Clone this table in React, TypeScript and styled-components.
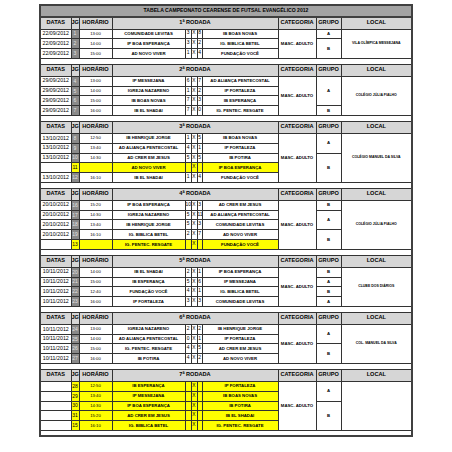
import React from "react";
import styled, { createGlobalStyle, css } from "styled-components";

const Global = createGlobalStyle`
  html, body { margin: 0; padding: 0; background: #ffffff; }
  body { font-family: "Liberation Sans", Arial, sans-serif; color: #000; }
`;

const Page = styled.div`
  padding: 4px 0 0 39px;
`;

const Table = styled.table`
  width: 372px;
  table-layout: fixed;
  border-collapse: collapse;
  border: 2px solid #404040;
`;

const cellBase = css`
  border: 1px solid #333333;
  padding: 0;
  text-align: center;
  vertical-align: middle;
  line-height: 1;
  white-space: nowrap;
  overflow: hidden;
`;

const TitleRow = styled.tr`
  height: 12px;
`;

const TitleCell = styled.td`
  ${cellBase};
  background: #a3a3a3;
  font-weight: 700;
  font-size: 5.1px;
  border-bottom: 2px solid #404040;
`;

const HeadRow = styled.tr`
  height: 12px;
`;

const HeadCell = styled.td`
  ${cellBase};
  background: #d6d6d6;
  font-weight: 700;
  font-size: 5.6px;
`;

const Row = styled.tr`
  height: 9.9px;
`;

const hl = css<{ $hl?: boolean }>`
  background: ${(p) => (p.$hl ? "#ffff00" : "#ffffff")};
`;

const DateCell = styled.td`
  ${cellBase};
  font-size: 5.3px;
  background: #ffffff;
`;

const JgCell = styled.td<{ $hl?: boolean }>`
  ${cellBase};
  font-size: 5px;
  background: ${(p) => (p.$hl ? "#ffff00" : "#8a8a8a")};
  color: ${(p) => (p.$hl ? "#000" : "#e4e4e4")};
`;

const TimeCell = styled.td<{ $hl?: boolean }>`
  ${cellBase};
  ${hl};
  font-size: 4.2px;
`;

const TeamCell = styled.td<{ $hl?: boolean }>`
  ${cellBase};
  ${hl};
  font-weight: 700;
  font-size: 4.3px;
`;

const ScoreCell = styled.td<{ $hl?: boolean }>`
  ${cellBase};
  ${hl};
  font-size: 4.9px;
`;

const CatCell = styled.td`
  ${cellBase};
  font-weight: 700;
  font-size: 4.3px;
  background: #ffffff;
`;

const GroupCell = styled.td`
  ${cellBase};
  font-weight: 700;
  font-size: 4.3px;
  background: #ffffff;
`;

const LocalCell = styled.td`
  ${cellBase};
  font-weight: 700;
  font-size: 3.5px;
  background: #ffffff;
`;

const GapRow = styled.tr`
  height: 5.5px;
`;

const GapCell = styled.td`
  border: 1px solid #333333;
  border-left: none;
  border-right: none;
  padding: 0;
  background: #ffffff;
`;

type Match = {
  date: string;
  jg: string;
  time: string;
  home: string;
  s1: string;
  s2: string;
  away: string;
  hl?: boolean;
};

type Round = {
  name: string;
  matches: Match[];
  groups: { label: string; span: number }[];
  local: string;
};

const m = (
  date: string,
  jg: string,
  time: string,
  home: string,
  s1: string,
  s2: string,
  away: string,
  hl?: boolean
): Match => ({ date, jg, time, home, s1, s2, away, hl });

const rounds: Round[] = [
  {
    name: "1ª RODADA",
    local: "VILA OLÍMPICA MESSEJANA",
    groups: [
      { label: "A", span: 1 },
      { label: "B", span: 2 },
    ],
    matches: [
      m("22/09/2012", "1", "13:00", "COMUNIDADE LEVITAS", "3", "8", "IB BOAS NOVAS"),
      m("22/09/2012", "2", "14:00", "IP BOA ESPERANÇA", "3", "2", "IG. BIBLICA BETEL"),
      m("22/09/2012", "3", "15:00", "AD NOVO VIVER", "1", "4", "FUNDAÇÃO VOCÊ"),
    ],
  },
  {
    name: "2ª RODADA",
    local: "COLÉGIO JÚLIA FIALHO",
    groups: [
      { label: "A", span: 3 },
      { label: "B", span: 1 },
    ],
    matches: [
      m("29/09/2012", "4", "13:00", "IP MESSEJANA", "6", "7", "AD ALIANÇA PENTECOSTAL"),
      m("29/09/2012", "5", "14:00", "IGREJA NAZARENO", "1", "2", "IP FORTALEZA"),
      m("29/09/2012", "6", "15:00", "IB BOAS NOVAS", "7", "3", "IB ESPERANÇA"),
      m("29/09/2012", "7", "16:00", "IB EL SHADAI", "7", "0", "IG. PENTEC. RESGATE"),
    ],
  },
  {
    name: "3ª RODADA",
    local: "COLÉGIO MANUEL DA SILVA",
    groups: [
      { label: "A", span: 2 },
      { label: "B", span: 3 },
    ],
    matches: [
      m("13/10/2012", "8", "12:50", "IB HENRIQUE JORGE", "1", "5", "IB BOAS NOVAS"),
      m("13/10/2012", "9", "13:40", "AD ALIANÇA PENTECOSTAL", "4", "1", "IP FORTALEZA"),
      m("13/10/2012", "10", "14:30", "AD CRER EM JESUS", "5", "5", "IB POTIRA"),
      m("", "11", "", "AD NOVO VIVER", "", "", "IP BOA ESPERANÇA", true),
      m("13/10/2012", "12", "16:10", "IB EL SHADAI", "1", "4", "FUNDAÇÃO VOCÊ"),
    ],
  },
  {
    name: "4ª RODADA",
    local: "COLÉGIO JÚLIA FIALHO",
    groups: [
      { label: "B", span: 1 },
      { label: "A", span: 2 },
      { label: "B", span: 2 },
    ],
    matches: [
      m("20/10/2012", "16", "15:20", "IP BOA ESPERANÇA", "10", "3", "AD CRER EM JESUS"),
      m("20/10/2012", "17", "14:30", "IGREJA NAZARENO", "5", "11", "AD ALIANÇA PENTECOSTAL"),
      m("20/10/2012", "18", "13:40", "IB HENRIQUE JORGE", "5", "3", "COMUNIDADE LEVITAS"),
      m("20/10/2012", "19", "16:10", "IG. BIBLICA BETEL", "2", "7", "AD NOVO VIVER"),
      m("", "13", "", "IG. PENTEC. RESGATE", "", "", "FUNDAÇÃO VOCÊ", true),
    ],
  },
  {
    name: "5ª RODADA",
    local: "CLUBE DOS DIÁRIOS",
    groups: [
      { label: "B", span: 1 },
      { label: "A", span: 1 },
      { label: "B", span: 1 },
      { label: "A", span: 1 },
    ],
    matches: [
      m("10/11/2012", "20", "14:00", "IB EL SHADAI", "2", "1", "IP BOA ESPERANÇA"),
      m("10/11/2012", "21", "15:00", "IB ESPERANÇA", "5", "6", "IP MESSEJANA"),
      m("10/11/2012", "22", "12:40", "FUNDAÇÃO VOCÊ", "4", "1", "IG. BIBLICA BETEL"),
      m("10/11/2012", "23", "16:00", "IP FORTALEZA", "3", "3", "COMUNIDADE LEVITAS"),
    ],
  },
  {
    name: "6ª RODADA",
    local: "COL. MANUEL DA SILVA",
    groups: [
      { label: "A", span: 2 },
      { label: "B", span: 2 },
    ],
    matches: [
      m("10/11/2012", "24", "13:00", "IGREJA NAZARENO", "2", "2", "IB HENRIQUE JORGE"),
      m("10/11/2012", "25", "14:00", "AD ALIANÇA PENTECOSTAL", "0", "1", "IP FORTALEZA"),
      m("10/11/2012", "26", "15:00", "IG. PENTEC. RESGATE", "4", "5", "AD CRER EM JESUS"),
      m("10/11/2012", "27", "16:00", "IB POTIRA", "4", "2", "AD NOVO VIVER"),
    ],
  },
  {
    name: "7ª RODADA",
    local: "",
    groups: [
      { label: "A", span: 2 },
      { label: "B", span: 3 },
    ],
    matches: [
      m("", "28", "12:50", "IB ESPERANÇA", "", "", "IP FORTALEZA", true),
      m("", "29", "13:40", "IP MESSEJANA", "", "", "IB BOAS NOVAS", true),
      m("", "30", "14:30", "IP BOA ESPERANÇA", "", "", "IB POTIRA", true),
      m("", "31", "15:20", "AD CRER EM JESUS", "", "", "IB EL SHADAI", true),
      m("", "15", "16:10", "IG. BIBLICA BETEL", "", "", "IG. PENTEC. RESGATE", true),
    ],
  },
];

const colWidths = [31, 8, 33, 73, 6, 6, 5, 76, 38, 25, 71];

function groupStarts(groups: Round["groups"]) {
  const map = new Map<number, { label: string; span: number }>();
  let idx = 0;
  groups.forEach((g) => {
    map.set(idx, g);
    idx += g.span;
  });
  return map;
}

function RoundBlock({ round }: { round: Round }) {
  const starts = groupStarts(round.groups);
  const n = round.matches.length;
  return (
    <>
      <HeadRow>
        <HeadCell>DATAS</HeadCell>
        <HeadCell>JG</HeadCell>
        <HeadCell>HORÁRIO</HeadCell>
        <HeadCell colSpan={5}>{round.name}</HeadCell>
        <HeadCell>CATEGORIA</HeadCell>
        <HeadCell>GRUPO</HeadCell>
        <HeadCell>LOCAL</HeadCell>
      </HeadRow>
      {round.matches.map((mt, i) => {
        const g = starts.get(i);
        return (
          <Row key={i}>
            <DateCell>{mt.date}</DateCell>
            <JgCell $hl={mt.hl}>{mt.jg}</JgCell>
            <TimeCell $hl={mt.hl}>{mt.time}</TimeCell>
            <TeamCell $hl={mt.hl}>{mt.home}</TeamCell>
            <ScoreCell $hl={mt.hl}>{mt.s1}</ScoreCell>
            <ScoreCell $hl={mt.hl}>X</ScoreCell>
            <ScoreCell $hl={mt.hl}>{mt.s2}</ScoreCell>
            <TeamCell $hl={mt.hl}>{mt.away}</TeamCell>
            {i === 0 && <CatCell rowSpan={n}>MASC. ADULTO</CatCell>}
            {g && <GroupCell rowSpan={g.span}>{g.label}</GroupCell>}
            {i === 0 && <LocalCell rowSpan={n}>{round.local}</LocalCell>}
          </Row>
        );
      })}
      <GapRow>
        <GapCell colSpan={11} />
      </GapRow>
    </>
  );
}

export default function App() {
  return (
    <Page>
      <Global />
      <Table>
        <colgroup>
          {colWidths.map((w, i) => (
            <col key={i} style={{ width: w }} />
          ))}
        </colgroup>
        <tbody>
          <TitleRow>
            <TitleCell colSpan={11}>
              TABELA CAMPEONATO CEARENSE DE FUTSAL EVANGÉLICO 2012
            </TitleCell>
          </TitleRow>
          {rounds.map((r, i) => (
            <RoundBlock key={i} round={r} />
          ))}
        </tbody>
      </Table>
    </Page>
  );
}
